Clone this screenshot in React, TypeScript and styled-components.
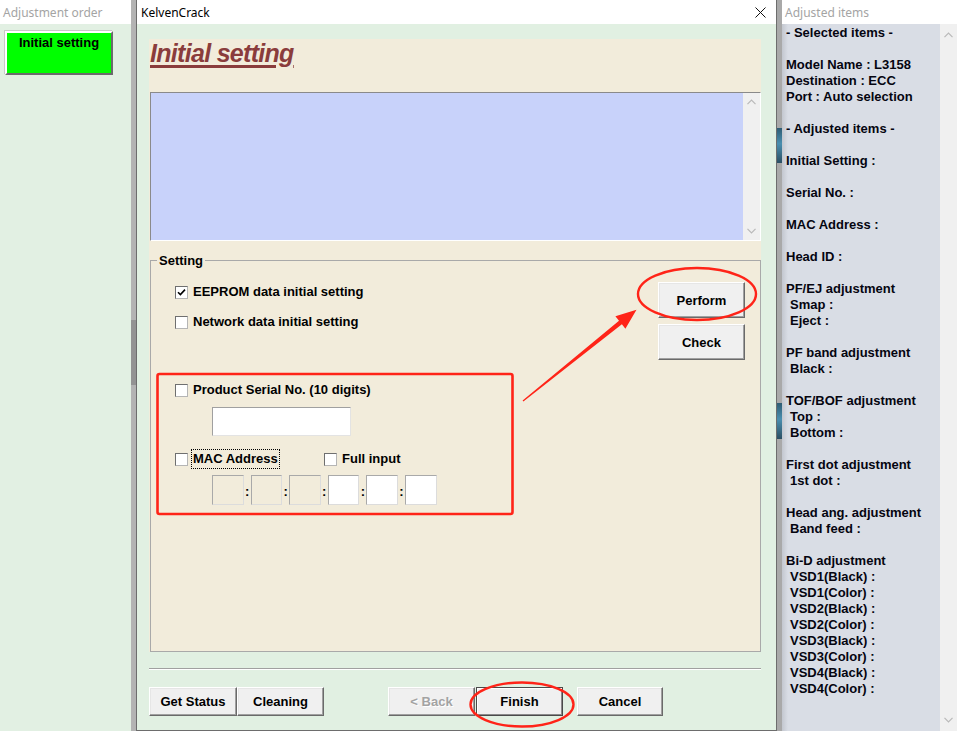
import React from "react";
import styled, { createGlobalStyle } from "styled-components";

const GlobalStyle = createGlobalStyle`
  html, body { margin: 0; padding: 0; background: #ffffff; overflow: hidden; }
  body { font-family: "Liberation Sans", Arial, sans-serif; }
  *, *::before, *::after { box-sizing: border-box; }
`;

const UI = `"Liberation Sans", Arial, sans-serif`;
const SYS = `"Noto Sans", "Liberation Sans", sans-serif`;

const Screen = styled.div`
  position: relative;
  width: 957px;
  height: 731px;
  display: flex;
  overflow: hidden;
  font-family: ${UI};
  color: #000;
`;

/* ---------- generic window parts ---------- */
const WindowTitle = styled.div<{ $muted?: boolean; $pad?: number }>`
  height: 24px;
  flex: none;
  background: #ffffff;
  display: flex;
  align-items: center;
  justify-content: space-between;
  padding: 0 10px 0 ${(p) => p.$pad ?? 3}px;
  font-family: ${SYS};
  font-size: 12px;
  color: ${(p) => (p.$muted ? "#a4a4a4" : "#000")};
  white-space: nowrap;
`;

/* ---------- left window ---------- */
const LeftWindow = styled.div`
  width: 131px;
  flex: none;
  display: flex;
  flex-direction: column;
`;

const LeftBody = styled.div`
  flex: 1;
  background: #e2f0e3;
  padding: 7px 0 0 5px;
`;

const OrderButton = styled.div`
  width: 108px;
  height: 44px;
  background: #00ff00;
  border: 2px solid;
  border-color: #ffffff #6b6b6b #6b6b6b #ffffff;
  box-shadow: -1px -1px 0 #c8c8c8;
  text-align: center;
  font-weight: bold;
  font-size: 13px;
  padding-top: 2px;
`;

const SplitStrip = styled.div`
  width: 5px;
  flex: none;
  background: #b3b3b3;
  display: flex;
  flex-direction: column;
`;

const StripThumb = styled.div`
  margin-top: 320px;
  height: 65px;
  background: #939393;
`;

/* ---------- dialog ---------- */
const Dialog = styled.div`
  width: 641px;
  flex: none;
  display: flex;
  flex-direction: column;
  border-left: 1px solid #6d6d6d;
  border-right: 1px solid #6d6d6d;
  border-bottom: 1px solid #6d6d6d;
`;

const CloseIcon = () => (
  <svg width="11" height="11" viewBox="0 0 11 11">
    <path d="M0.5 0.5 L10.5 10.5 M10.5 0.5 L0.5 10.5" stroke="#111" strokeWidth="1" fill="none" />
  </svg>
);

const DialogBody = styled.div`
  flex: 1;
  background: #e1f0e2;
  padding: 15px 15px 0 12px;
  display: flex;
  flex-direction: column;
`;

const Panel = styled.div`
  height: 613px;
  flex: none;
  background: #f2ecdb;
  display: flex;
  flex-direction: column;
`;

const Header = styled.div`
  height: 53px;
  flex: none;
  padding: 0 0 0 1px;
`;

const PageTitle = styled.span`
  font-family: ${UI};
  font-style: italic;
  font-weight: bold;
  font-size: 25px;
  line-height: 28px;
  letter-spacing: -0.7px;
  color: #8a3c3c;
  text-decoration: underline;
  text-decoration-thickness: 3px;
  text-underline-offset: 3px;
`;

const Memo = styled.div`
  height: 149px;
  flex: none;
  margin-left: 1px;
  display: flex;
  border-top: 1px solid #8a8a8a;
  border-left: 1px solid #8a8a8a;
  border-right: 1px solid #ffffff;
  border-bottom: 1px solid #ffffff;
  box-shadow: inset 1px 1px 0 #6a6a6a;
`;

const MemoArea = styled.div`
  flex: 1;
  background: #c8d2fa;
`;

const VScroll = styled.div<{ $pad?: number }>`
  width: 17px;
  flex: none;
  background: #f0f0f0;
  display: flex;
  flex-direction: column;
  align-items: center;
  justify-content: space-between;
  padding: ${(p) => p.$pad ?? 6}px 0;
`;

const Chevron = ({ down }: { down?: boolean }) => (
  <svg width="9" height="6" viewBox="0 0 9 6">
    <path
      d={down ? "M0.5 0.8 L4.5 4.8 L8.5 0.8" : "M0.5 5.2 L4.5 1.2 L8.5 5.2"}
      stroke="#b9b9b9"
      strokeWidth="1.2"
      fill="none"
    />
  </svg>
);

const GroupBox = styled.fieldset`
  flex: 1;
  margin: 12px 0 0 1px;
  padding: 0;
  min-width: 0;
  border: 1px solid #a9a9a9;
  display: flex;
`;

const GroupLegend = styled.legend`
  margin-left: 6px;
  padding: 0 2px;
  font-weight: bold;
  font-size: 13px;
  line-height: 15px;
`;

const GroupContent = styled.div`
  flex: 1;
  display: flex;
  padding: 14px 15px 0 24px;
`;

const LeftCol = styled.div`
  flex: 1;
  display: flex;
  flex-direction: column;
  padding-top: 2px;
`;

const RightCol = styled.div`
  display: flex;
  flex-direction: column;
  gap: 6px;
`;

const CheckRow = styled.div<{ $gap?: number }>`
  height: 16px;
  margin-top: ${(p) => p.$gap ?? 0}px;
  display: flex;
  align-items: center;
  font-weight: bold;
  font-size: 13px;
  white-space: nowrap;
`;

const CheckItem = styled.div<{ $w?: number }>`
  display: flex;
  align-items: center;
  width: ${(p) => (p.$w ? `${p.$w}px` : "auto")};
`;

const Box = styled.span`
  width: 13px;
  height: 13px;
  flex: none;
  background: #ffffff;
  border: 1px solid;
  border-color: #6f6f6f #b5b5b5 #b5b5b5 #6f6f6f;
  display: flex;
  align-items: center;
  justify-content: center;
`;

const Label = styled.span<{ $focus?: boolean }>`
  margin-left: ${(p) => (p.$focus ? 4 : 5)}px;
  line-height: 16px;
  padding: ${(p) => (p.$focus ? "1px 1px" : "0")};
  outline: ${(p) => (p.$focus ? "1px dotted #000" : "none")};
`;

const CheckBox = ({ checked, label, focus, w }: { checked?: boolean; label: string; focus?: boolean; w?: number }) => (
  <CheckItem $w={w}>
    <Box>
      {checked && (
        <svg width="9" height="9" viewBox="0 0 9 9">
          <path d="M1 4.2 L3.4 6.6 L8 1.6" stroke="#000" strokeWidth="1.6" fill="none" />
        </svg>
      )}
    </Box>
    <Label $focus={focus}>{label}</Label>
  </CheckItem>
);

const TextField = styled.div`
  width: 139px;
  height: 29px;
  margin: 9px 0 0 37px;
  background: #ffffff;
  border: 1px solid;
  border-color: #a0a0a0 #e3e3e3 #e3e3e3 #a0a0a0;
`;

const MacRow = styled.div`
  display: flex;
  align-items: flex-end;
  margin: 8px 0 0 37px;
`;

const MacCell = styled.div<{ $enabled?: boolean }>`
  width: 31.6px;
  height: 30px;
  background: ${(p) => (p.$enabled ? "#ffffff" : "#f2ecdb")};
  border: 1px solid;
  border-color: #a9a9a9 #dcdcdc #dcdcdc #a9a9a9;
`;

const MacSep = styled.span`
  width: 7px;
  text-align: center;
  font-weight: bold;
  font-size: 13px;
  line-height: 13px;
  padding-bottom: 7px;
`;

const WinButton = styled.div<{ $w?: number; $h?: number; $ml?: number; $disabled?: boolean; $default?: boolean }>`
  width: ${(p) => p.$w ?? 87}px;
  height: ${(p) => p.$h ?? 29}px;
  margin-left: ${(p) => p.$ml ?? 0}px;
  flex: none;
  background: #f0f0f0;
  border: 1px solid;
  border-color: ${(p) => (p.$default ? "#4a4a4a" : "#ffffff #6a6a6a #6a6a6a #ffffff")};
  box-shadow: ${(p) =>
    p.$default
      ? "inset 1px 1px 0 #ffffff, inset -1px -1px 0 #8a8a8a"
      : "inset -1px -1px 0 #a0a0a0, inset 1px 1px 0 #e6e6e6"};
  display: flex;
  align-items: center;
  justify-content: center;
  font-weight: bold;
  font-size: 13px;
  color: ${(p) => (p.$disabled ? "#a3a3a3" : "#000")};
  text-shadow: ${(p) => (p.$disabled ? "1px 1px 0 #ffffff" : "none")};
`;

const Separator = styled.div`
  height: 2px;
  flex: none;
  margin-top: 16px;
  border-top: 1px solid #a0a0a0;
  border-bottom: 1px solid #ffffff;
  margin-right: 0;
`;

const ButtonBar = styled.div`
  display: flex;
  margin-top: 17px;
`;

/* ---------- right window ---------- */
const RightWindow = styled.div`
  flex: 1;
  display: flex;
`;

const Frame = styled.div`
  width: 5px;
  flex: none;
  background: #a9a9a9;
  display: flex;
  flex-direction: column;
`;

const FrameChip = styled.div<{ $top: number; $h: number }>`
  margin-top: ${(p) => p.$top}px;
  height: ${(p) => p.$h}px;
  background: linear-gradient(180deg, #2f5d74 0%, #4a8fb0 45%, #2b4f63 100%);
`;

const RightContent = styled.div`
  flex: 1;
  display: flex;
  flex-direction: column;
`;

const RightBody = styled.div`
  flex: 1;
  display: flex;
`;

const ItemList = styled.div`
  flex: 1;
  background: linear-gradient(90deg, #c3c7cf 0px, #d9dde5 6px, #d9dde5 100%);
  padding: 1px 0 0 4px;
  font-weight: bold;
  font-size: 13px;
  line-height: 16px;
  white-space: pre;
  color: #050510;
`;

const Item = styled.div<{ $indent?: boolean }>`
  height: 16px;
  padding-left: ${(p) => (p.$indent ? 4 : 0)}px;
`;

/* ---------- annotation overlay ---------- */
const Overlay = styled.svg`
  position: absolute;
  left: 0;
  top: 0;
  pointer-events: none;
`;

const items: string[] = [
  "- Selected items -",
  "",
  "Model Name : L3158",
  "Destination : ECC",
  "Port : Auto selection",
  "",
  "- Adjusted items -",
  "",
  "Initial Setting :",
  "",
  "Serial No. :",
  "",
  "MAC Address :",
  "",
  "Head ID :",
  "",
  "PF/EJ adjustment",
  ">Smap :",
  ">Eject :",
  "",
  "PF band adjustment",
  ">Black :",
  "",
  "TOF/BOF adjustment",
  ">Top :",
  ">Bottom :",
  "",
  "First dot adjustment",
  ">1st dot :",
  "",
  "Head ang. adjustment",
  ">Band feed :",
  "",
  "Bi-D adjustment",
  ">VSD1(Black) :",
  ">VSD1(Color) :",
  ">VSD2(Black) :",
  ">VSD2(Color) :",
  ">VSD3(Black) :",
  ">VSD3(Color) :",
  ">VSD4(Black) :",
  ">VSD4(Color) :",
];

export default function App() {
  return (
    <>
      <GlobalStyle />
      <Screen>
        <LeftWindow>
          <WindowTitle $muted $pad={3}>Adjustment order</WindowTitle>
          <LeftBody>
            <OrderButton>Initial setting</OrderButton>
          </LeftBody>
        </LeftWindow>

        <SplitStrip>
          <StripThumb />
        </SplitStrip>

        <Dialog>
          <WindowTitle $pad={4}>
            <span>KelvenCrack</span>
            <CloseIcon />
          </WindowTitle>
          <DialogBody>
            <Panel>
              <Header>
                <PageTitle>Initial setting</PageTitle>
              </Header>
              <Memo>
                <MemoArea />
                <VScroll>
                  <Chevron />
                  <Chevron down />
                </VScroll>
              </Memo>
              <GroupBox>
                <GroupLegend>Setting</GroupLegend>
                <GroupContent>
                  <LeftCol>
                    <CheckRow>
                      <CheckBox checked label="EEPROM data initial setting" />
                    </CheckRow>
                    <CheckRow $gap={14}>
                      <CheckBox label="Network data initial setting" />
                    </CheckRow>
                    <CheckRow $gap={52}>
                      <CheckBox label="Product Serial No. (10 digits)" />
                    </CheckRow>
                    <TextField />
                    <CheckRow $gap={15}>
                      <CheckBox label="MAC Address" focus w={149} />
                      <CheckBox label="Full input" />
                    </CheckRow>
                    <MacRow>
                      <MacCell />
                      <MacSep>:</MacSep>
                      <MacCell />
                      <MacSep>:</MacSep>
                      <MacCell />
                      <MacSep>:</MacSep>
                      <MacCell $enabled />
                      <MacSep>:</MacSep>
                      <MacCell $enabled />
                      <MacSep>:</MacSep>
                      <MacCell $enabled />
                    </MacRow>
                  </LeftCol>
                  <RightCol>
                    <WinButton $h={36}>Perform</WinButton>
                    <WinButton $h={36}>Check</WinButton>
                  </RightCol>
                </GroupContent>
              </GroupBox>
            </Panel>
            <Separator />
            <ButtonBar>
              <WinButton $w={88}>Get Status</WinButton>
              <WinButton>Cleaning</WinButton>
              <WinButton $ml={64} $disabled>&lt; Back</WinButton>
              <WinButton $ml={1} $default>Finish</WinButton>
              <WinButton $ml={14} $w={86}>Cancel</WinButton>
            </ButtonBar>
          </DialogBody>
        </Dialog>

        <RightWindow>
          <Frame>
            <FrameChip $top={128} $h={35} />
            <FrameChip $top={240} $h={36} />
          </Frame>
          <RightContent>
            <WindowTitle $muted $pad={3}>Adjusted items</WindowTitle>
            <RightBody>
              <ItemList>
                {items.map((t, i) =>
                  t.startsWith(">") ? (
                    <Item key={i} $indent>{t.slice(1)}</Item>
                  ) : (
                    <Item key={i}>{t}</Item>
                  )
                )}
              </ItemList>
              <VScroll $pad={8}>
                <Chevron />
                <Chevron down />
              </VScroll>
            </RightBody>
          </RightContent>
        </RightWindow>

        <Overlay width="957" height="731" viewBox="0 0 957 731">
          <rect x="157.5" y="374" width="355" height="140" rx="2" fill="none" stroke="#ff2418" strokeWidth="2.6" />
          <ellipse cx="697" cy="294" rx="59" ry="26" fill="none" stroke="#ff2418" strokeWidth="2.4" />
          <ellipse cx="522" cy="704.5" rx="51.5" ry="22" fill="none" stroke="#ff2418" strokeWidth="2.4" />
          <polygon
            points="523.4,401.5 621.9,324.2 625.4,328.7 636.5,309.7 615.4,316.3 619.0,320.8 522.6,400.5"
            fill="#ff2418"
          />
        </Overlay>
      </Screen>
    </>
  );
}
